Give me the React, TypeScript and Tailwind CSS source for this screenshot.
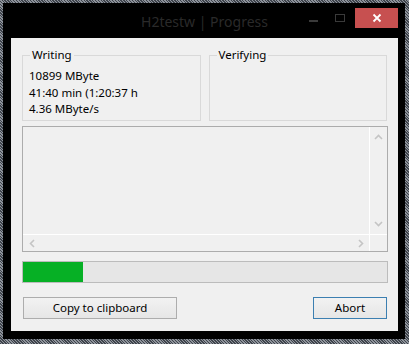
import type { ReactNode } from 'react';

const font = { fontFamily: '"Noto Sans", "Open Sans", Arial, sans-serif' };

function Chevron({ dir }: { dir: 'up' | 'down' | 'left' | 'right' }) {
  const pts = {
    up: '1,6 4.5,2.5 8,6',
    down: '1,3 4.5,6.5 8,3',
    left: '6,1 2.5,4.5 6,8',
    right: '3,1 6.5,4.5 3,8',
  }[dir];
  return (
    <svg width="9" height="9" viewBox="0 0 9 9" className="block">
      <polyline points={pts} fill="none" stroke="#c4c4c4" strokeWidth="1.6" />
    </svg>
  );
}

function GroupBox({ title, children }: { title: string; children?: ReactNode }) {
  return (
    <fieldset className="flex-1 border border-[#d9d9d9] px-[6px] pb-[3px]">
      <legend className="ml-[1px] px-[2px] text-[11.5px] leading-[16px] text-black">{title}</legend>
      <div className="pt-[5px] text-[11.5px] leading-[16.5px] text-black">{children}</div>
    </fieldset>
  );
}

function Button({ label, primary }: { label: string; primary?: boolean }) {
  return (
    <button
      type="button"
      className={`h-[22px] border bg-gradient-to-b from-[#f2f2f2] to-[#e6e6e6] text-[11.5px] leading-none text-black ${
        primary ? 'w-[74px] border-[#3c7fb1]' : 'w-[154px] border-[#adadad]'
      }`}
    >
      {label}
    </button>
  );
}

export default function App() {
  return (
    <div
      className="h-[344px] w-[409px] overflow-hidden bg-[repeating-linear-gradient(45deg,#3e434b_0px,#3e434b_1px,#8e939b_1px,#8e939b_2px)] pl-[3px] pt-[3px]"
      style={font}
    >
      <div className="flex h-[336px] w-[402px] flex-col bg-black pb-[8px] pl-[8px] pr-[7px]">
        {/* title bar */}
        <div className="grid h-[35px] grid-cols-[1fr_auto_1fr]">
          <div />
          <div className="pt-[9px] text-[14px] leading-[20px] text-[#2a2a2a]">H2testw | Progress</div>
          <div className="flex items-start justify-end pt-[5px]">
            <div className="mr-[17px] mt-[12px] h-[2px] w-[9px] bg-[#3a3a3a]" />
            <div className="mr-[10px] mt-[6px] h-[8px] w-[10px] border border-[#3a3a3a]" />
            <div className="flex h-[20px] w-[43px] items-center justify-center bg-[#c75050]">
              <svg width="10" height="10" viewBox="0 0 10 10">
                <path d="M1.5 1.5 L8.5 8.5 M8.5 1.5 L1.5 8.5" stroke="#fff" strokeWidth="1.8" />
              </svg>
            </div>
          </div>
        </div>

        {/* client area */}
        <div className="flex flex-1 flex-col bg-[#f0f0f0] pl-[11px] pr-[10px] pt-[9px]">
          <div className="flex h-[74px] gap-[8px] pr-[1px]">
            <GroupBox title="Writing">
              <div>10899 MByte</div>
              <div>41:40 min (1:20:37 h</div>
              <div>4.36 MByte/s</div>
            </GroupBox>
            <GroupBox title="Verifying" />
          </div>

          {/* log box */}
          <div className="mt-[5px] flex h-[126px] flex-col border border-[#acacac] bg-[#f0f0f0]">
            <div className="flex flex-1">
              <div className="flex-1" />
              <div className="flex w-[18px] flex-col items-center justify-between border-l border-white py-[6px]">
                <Chevron dir="up" />
                <Chevron dir="down" />
              </div>
            </div>
            <div className="flex h-[17px] border-t border-white">
              <div className="flex flex-1 items-center justify-between border-r border-white pl-[5px] pr-[4px]">
                <Chevron dir="left" />
                <Chevron dir="right" />
              </div>
              <div className="w-[17px]" />
            </div>
          </div>

          {/* progress */}
          <div className="mt-[9px] h-[22px] border border-[#bcbcbc] bg-[#e6e6e6]">
            <div className="h-full bg-[#06b025]" style={{ width: 60 }} />
          </div>

          <div className="mt-[14px] flex justify-between pl-[1px] pr-[1px]">
            <Button label="Copy to clipboard" />
            <Button label="Abort" primary />
          </div>
        </div>
      </div>
    </div>
  );
}
